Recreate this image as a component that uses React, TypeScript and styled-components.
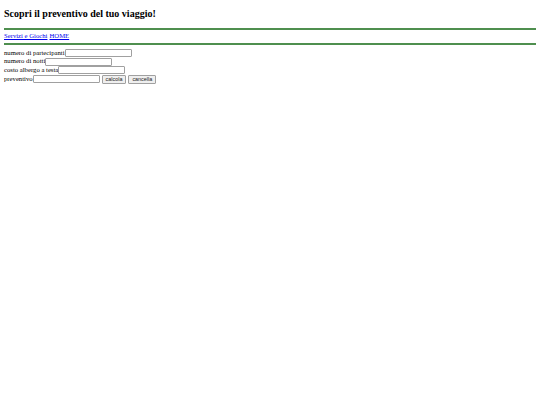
import React from 'react';
import styled, { createGlobalStyle } from 'styled-components';

const GlobalStyle = createGlobalStyle`
  html, body {
    margin: 0;
    padding: 0;
    background: #ffffff;
  }
  body {
    padding: 4px;
    font-family: "Liberation Serif", "Times New Roman", serif;
    font-size: 6.7px;
    color: #000000;
  }
`;

const Title = styled.h2`
  font-size: 10px;
  font-weight: bold;
  margin: 4px 0 8px;
  line-height: 12px;
`;

const Rule = styled.hr`
  border: none;
  height: 2px;
  background: #4f8f4f;
  margin: 0;
`;

const Nav = styled.nav`
  display: flex;
  gap: 2px;
  padding: 2px 0 3px;
  line-height: 8px;
`;

const NavLink = styled.a`
  color: #0000ee;
  text-decoration: underline;
`;

const Form = styled.form`
  display: flex;
  flex-direction: column;
  padding-top: 3.5px;
`;

const Row = styled.div`
  display: flex;
  align-items: center;
  height: 8.8px;
  line-height: 8.8px;
`;

const Field = styled.input`
  width: 67px;
  height: 8px;
  box-sizing: border-box;
  border: 1px solid #a0a0a0;
  border-radius: 1px;
  padding: 0 1px;
  font-size: 5px;
  margin: 0;
`;

const Button = styled.button`
  height: 9px;
  box-sizing: border-box;
  margin-left: 2px;
  padding: 0 3px;
  font-family: "Liberation Sans", Arial, sans-serif;
  font-size: 5.4px;
  line-height: 7px;
  border: 1px solid #a0a0a0;
  border-radius: 1px;
  background: #efefef;
  color: #222;
`;

const fields = [
  { label: 'numero di partecipanti' },
  { label: 'numero di notti' },
  { label: 'costo albergo a testa' },
];

export default function App() {
  return (
    <>
      <GlobalStyle />
      <Title>Scopri il preventivo del tuo viaggio!</Title>
      <Rule />
      <Nav>
        <NavLink href="#">Servizi e Giochi</NavLink>
        <NavLink href="#">HOME</NavLink>
      </Nav>
      <Rule />
      <Form onSubmit={(e) => e.preventDefault()}>
        {fields.map(({ label }) => (
          <Row key={label}>
            {label}
            <Field type="text" />
          </Row>
        ))}
        <Row>
          preventivo
          <Field type="text" />
          <Button type="button">calcola</Button>
          <Button type="reset">cancella</Button>
        </Row>
      </Form>
    </>
  );
}
